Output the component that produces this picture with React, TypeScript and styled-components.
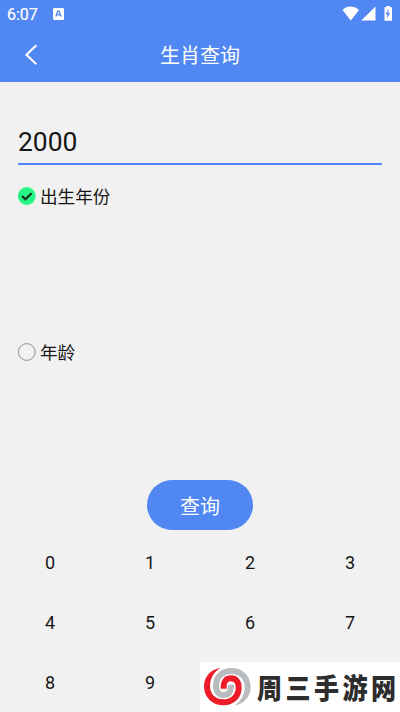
import React, { useState } from 'react';
import styled, { createGlobalStyle } from 'styled-components';

const BLUE = '#5087f3';

const GlobalStyle = createGlobalStyle`
  * { box-sizing: border-box; }
  body {
    margin: 0;
    background: #f1f1f1;
    color: #161616;
    font-family: Roboto, "Noto Sans CJK SC", sans-serif;
  }
  button { border: 0; padding: 0; background: none; font: inherit; color: inherit; }
`;

const Screen = styled.main`
  position: relative;
  display: flex;
  flex-direction: column;
  width: 400px;
  height: 712px;
  overflow: hidden;
  background: #f1f1f1;
`;

const Header = styled.header`
  height: 82px;
  flex: none;
  background: ${BLUE};
  color: #fff;
`;

const StatusBar = styled.div`
  display: flex;
  align-items: center;
  height: 28px;
  padding: 0 7px;
  font-size: 16px;
`;

const Clock = styled.span`
  width: 46px;
  padding-top: 1px;
  line-height: 28px;
  -webkit-text-stroke: 0.2px #fff;
`;

const StatusIcons = styled.svg`
  margin-left: auto;
`;

const TitleBar = styled.div`
  display: grid;
  grid-template-columns: 60px 1fr 60px;
  align-items: center;
  height: 54px;
`;

const BackButton = styled.button`
  display: flex;
  padding-left: 23px;
`;

const Title = styled.h1`
  margin: 0;
  padding-top: 2px;
  font-size: 20px;
  font-weight: 400;
  line-height: 52px;
  text-align: center;
`;

const Form = styled.section`
  display: flex;
  flex: none;
  flex-direction: column;
  height: 398px;
  padding: 38px 18px 0;
`;

const YearInput = styled.div`
  height: 45px;
  border-bottom: 2px solid ${BLUE};
  font-size: 26.4px;
  line-height: 45px;
`;

const Option = styled.button<{ $gap: number }>`
  display: flex;
  align-items: center;
  gap: 4px;
  height: 26px;
  margin-top: ${({ $gap }) => $gap}px;
  font-size: 17.6px;
`;

const OptionLabel = styled.span`
  padding-top: 2px;
  line-height: 26px;
`;

const SubmitButton = styled.button`
  width: 106px;
  height: 50px;
  flex: none;
  align-self: center;
  padding-top: 4px;
  border-radius: 25px;
  background: ${BLUE};
  color: #fff;
  font-size: 20px;
  line-height: 46px;
`;

const Keypad = styled.div`
  display: grid;
  flex: none;
  grid-template-columns: repeat(4, 100px);
  grid-auto-rows: 60px;
  margin-top: 3px;
`;

const Key = styled.button`
  font-size: 18px;
  line-height: 60px;
  text-align: center;
`;

const Watermark = styled.div`
  position: absolute;
  right: 0;
  bottom: 0;
  display: flex;
  width: 200px;
  height: 50px;
  background: #fff;
`;

const Logo = styled.svg`
  flex: none;
`;

const BrandName = styled.span`
  flex: none;
  margin-left: 3px;
  color: #2e2d2d;
  font-family: "Noto Sans CJK SC", sans-serif;
  font-size: 28.5px;
  font-weight: 900;
  letter-spacing: 3.9px;
  line-height: 49px;
  white-space: nowrap;
  transform: scaleX(0.88);
  transform-origin: left center;
`;

function RadioMark({ checked }: { checked: boolean }) {
  return (
    <svg width="18" height="18" viewBox="0 0 18 18" fill="none">
      {checked ? (
        <>
          <circle cx="8.8" cy="9" r="8.9" fill="#27f584" />
          <path d="M4 9l3.4 3.3 6.2-6.1" stroke="#152b1d" strokeWidth="2" />
        </>
      ) : (
        <circle cx="8.8" cy="9" r="8.4" stroke="#858585" strokeWidth="0.9" />
      )}
    </svg>
  );
}

function KeyboardBadge() {
  return (
    <svg width="12" height="12" viewBox="0 0 12 12">
      <rect width="11" height="12" rx="1.2" fill="#fff" />
      <path d="M2.8 8.6L4.8 3.2h1.3l2 5.4M3.5 6.8h4" fill="none" stroke={BLUE} strokeWidth="1.3" />
    </svg>
  );
}

// One arm of the swirl: a tapering tip joined to a band that hooks into the centre.
function SwirlArm({ color, flipped }: { color: string; flipped?: boolean }) {
  return (
    <g transform={flipped ? 'rotate(180 82 74)' : undefined}>
      <path d="M62 17C32 22 12 44 12 73L30 73C30 48 43 28 62 17Z" fill={color} />
      <path
        d="M21 72C21 102 42 121 70 121C98 121 116 102 116 77C116 58 107 49 93 49C78 49 71 59 71 73V80"
        fill="none"
        stroke={color}
        strokeWidth="18"
      />
    </g>
  );
}

function SwirlLogo() {
  return (
    <Logo width="54" height="50" viewBox="0 0 162 150">
      <SwirlArm color="#b8bcbf" flipped />
      <SwirlArm color="#ed1c28" />
    </Logo>
  );
}

export default function App() {
  const [mode, setMode] = useState<'year' | 'age'>('year');
  const [value, setValue] = useState('2000');
  return (
    <>
      <GlobalStyle />
      <Screen>
        <Header>
          <StatusBar>
            <Clock>6:07</Clock>
            <KeyboardBadge />
            <StatusIcons width="52" height="16" viewBox="0 0 52 16" fill="#fff">
              <path d="M1.5 3.9C6-0.6 13-0.6 18 3.9L9.8 14.5Z" />
              <path d="M34.5 0.5v14H20.3Z" />
              <path d="M43.5 1.2h2V0h3.5v1.2h2V14.7h-7.5Z" />
              <path d="M48 3l-3.5 5.3h2l-.7 4.2 3.4-5.4h-2Z" fill={BLUE} />
            </StatusIcons>
          </StatusBar>
          <TitleBar>
            <BackButton aria-label="返回">
              <svg width="16" height="22" viewBox="0 0 16 22" fill="none">
                <path d="M13.3 1.2L3.5 10.7l9.8 9.5" stroke="#fff" strokeWidth="2.1" />
              </svg>
            </BackButton>
            <Title>生肖查询</Title>
          </TitleBar>
        </Header>
        <Form>
          <YearInput>{value}</YearInput>
          <Option $gap={18} onClick={() => setMode('year')}>
            <RadioMark checked={mode === 'year'} />
            <OptionLabel>出生年份</OptionLabel>
          </Option>
          <Option $gap={130} onClick={() => setMode('age')}>
            <RadioMark checked={mode === 'age'} />
            <OptionLabel>年龄</OptionLabel>
          </Option>
        </Form>
        <SubmitButton>查询</SubmitButton>
        <Keypad>
          {[0, 1, 2, 3, 4, 5, 6, 7, 8, 9].map((digit) => (
            <Key key={digit} onClick={() => setValue((current) => current + digit)}>
              {digit}
            </Key>
          ))}
        </Keypad>
        <Watermark>
          <SwirlLogo />
          <BrandName>周三手游网</BrandName>
        </Watermark>
      </Screen>
    </>
  );
}
